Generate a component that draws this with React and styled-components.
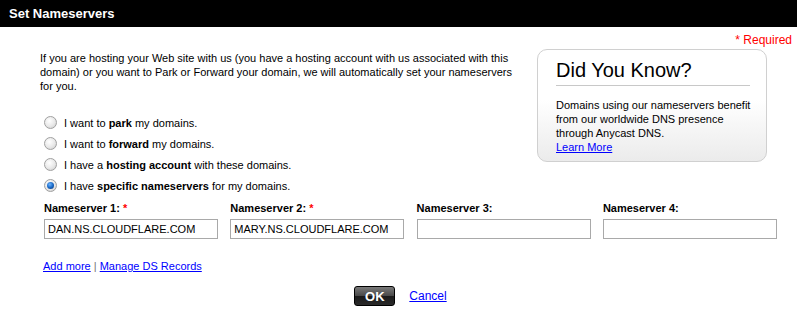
import React from "react";
import styled, { createGlobalStyle } from "styled-components";

const Global = createGlobalStyle`
  html, body { margin: 0; padding: 0; background: #fff; }
  body { font-family: "Liberation Sans", Arial, sans-serif; font-size: 11px; color: #000; }
`;

const Page = styled.div`
  width: 797px;
  height: 313px;
  overflow: hidden;
  background: #fff;
`;

const Header = styled.div`
  height: 27px;
  background: #000;
  color: #fff;
  font-weight: bold;
  font-size: 13px;
  display: flex;
  align-items: center;
  padding-left: 9px;
`;

const RequiredRow = styled.div`
  display: flex;
  justify-content: flex-end;
  padding: 6px 5px 0 0;
  height: 14px;
  font-size: 12px;
  color: #f00;
`;

const TopRow = styled.div`
  display: flex;
  align-items: flex-start;
`;

const LeftCol = styled.div`
  margin-left: 40px;
  width: 480px;
`;

const Intro = styled.p`
  margin: 4px 0 0;
  line-height: 14px;
  font-size: 11px;
`;

const RadioList = styled.div`
  margin-top: 23px;
  margin-left: 4px;
  display: flex;
  flex-direction: column;
  gap: 8px;
`;

const RadioRow = styled.label`
  display: flex;
  align-items: center;
  height: 13px;
  gap: 7px;
  font-size: 11px;
`;

const Radio = styled.span`
  width: 11px;
  height: 11px;
  border-radius: 50%;
  border: 1px solid #a0a0a0;
  background: radial-gradient(circle at 40% 35%, #ffffff 0%, #e8e8e8 55%, #c8c8c8 100%);
  display: flex;
  align-items: center;
  justify-content: center;
  flex: none;
  &::after {
    content: "";
    display: ${(p) => (p.$checked ? "block" : "none")};
    width: 7px;
    height: 7px;
    border-radius: 50%;
    background: radial-gradient(circle at 40% 35%, #6fb6ff 0%, #1a6ac8 50%, #0a2f6a 100%);
  }
`;

const Box = styled.div`
  margin-left: auto;
  margin-right: 30px;
  margin-top: 2px;
  width: 230px;
  height: 113px;
  box-sizing: border-box;
  border: 1px solid #d0d0d0;
  border-radius: 10px;
  background: linear-gradient(#ffffff 0%, #ffffff 45%, #ebebeb 100%);
  padding: 8px 16px 0 18px;
`;

const BoxTitle = styled.div`
  font-size: 20px;
  line-height: 24px;
  color: #000;
  padding-bottom: 3px;
  border-bottom: 1px solid #c8c8c8;
`;

const BoxText = styled.p`
  margin: 12px -12px 0 0;
  line-height: 14px;
  font-size: 11px;
`;

const Link = styled.a`
  color: #00f;
  text-decoration: underline;
  cursor: pointer;
`;

const NsGrid = styled.div`
  display: grid;
  grid-template-columns: repeat(4, 174px);
  column-gap: 12.3px;
  margin: 10px 0 0 44px;
`;

const NsField = styled.div`
  display: flex;
  flex-direction: column;
  gap: 4px;
`;

const NsLabel = styled.div`
  font-weight: bold;
  font-size: 11px;
  line-height: 13px;
  color: #000;
`;

const Star = styled.span`
  color: #f00;
`;

const Input = styled.input`
  box-sizing: border-box;
  width: 174px;
  height: 20px;
  border: 1px solid #a9a9a9;
  padding: 0 3px;
  font-family: "Liberation Sans", Arial, sans-serif;
  font-size: 11px;
  color: #000;
  outline: none;
`;

const LinksRow = styled.div`
  margin: 21px 0 0 43px;
  font-size: 11px;
  color: #777;
`;

const Buttons = styled.div`
  display: flex;
  justify-content: center;
  align-items: center;
  gap: 14px;
  margin-top: 14px;
  padding-left: 4px;
`;

const OkButton = styled.button`
  width: 41px;
  height: 20px;
  border: 1px solid #000;
  border-radius: 3px;
  background: linear-gradient(#7a7a7a 0%, #4a4a4a 48%, #1a1a1a 52%, #2a2a2a 100%);
  color: #fff;
  font-family: "Liberation Sans", Arial, sans-serif;
  font-weight: bold;
  font-size: 13px;
  padding: 0;
  display: flex;
  align-items: center;
  justify-content: center;
`;

const CancelLink = styled(Link)`
  font-size: 12px;
`;

const options = [
  ["I want to ", "park", " my domains."],
  ["I want to ", "forward", " my domains."],
  ["I have a ", "hosting account", " with these domains."],
  ["I have ", "specific nameservers", " for my domains."],
];

const ns = [
  { label: "Nameserver 1:", req: true, value: "DAN.NS.CLOUDFLARE.COM" },
  { label: "Nameserver 2:", req: true, value: "MARY.NS.CLOUDFLARE.COM" },
  { label: "Nameserver 3:", req: false, value: "" },
  { label: "Nameserver 4:", req: false, value: "" },
];

export default function App() {
  return (
    <Page>
      <Global />
      <Header>Set Nameservers</Header>
      <RequiredRow>* Required</RequiredRow>
      <TopRow>
        <LeftCol>
          <Intro>
            If you are hosting your Web site with us (you have a hosting account with us associated with this
            domain) or you want to Park or Forward your domain, we will automatically set your nameservers
            for you.
          </Intro>
          <RadioList>
            {options.map(([a, b, c], i) => (
              <RadioRow key={i}>
                <Radio $checked={i === 3} />
                <span>
                  {a}
                  <b>{b}</b>
                  {c}
                </span>
              </RadioRow>
            ))}
          </RadioList>
        </LeftCol>
        <Box>
          <BoxTitle>Did You Know?</BoxTitle>
          <BoxText>
            Domains using our nameservers benefit
            <br />
            from our worldwide DNS presence
            <br />
            through Anycast DNS.
            <br />
            <Link>Learn More</Link>
          </BoxText>
        </Box>
      </TopRow>
      <NsGrid>
        {ns.map((n) => (
          <NsField key={n.label}>
            <NsLabel>
              {n.label} {n.req && <Star>*</Star>}
            </NsLabel>
            <Input defaultValue={n.value} />
          </NsField>
        ))}
      </NsGrid>
      <LinksRow>
        <Link>Add more</Link> | <Link>Manage DS Records</Link>
      </LinksRow>
      <Buttons>
        <OkButton>OK</OkButton>
        <CancelLink>Cancel</CancelLink>
      </Buttons>
    </Page>
  );
}
